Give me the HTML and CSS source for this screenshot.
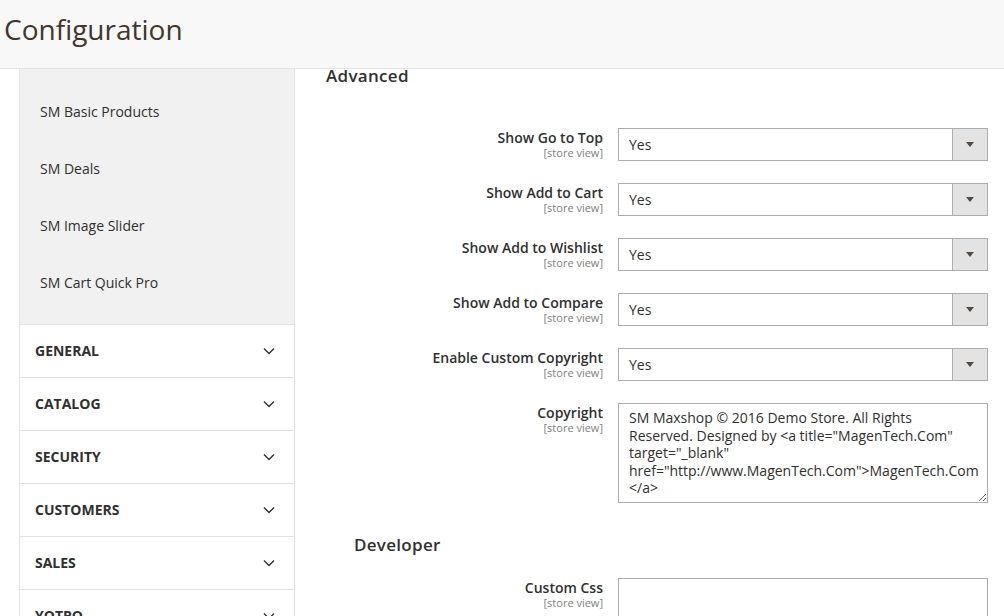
FILE: index.html
```html
<!DOCTYPE html>
<html>
<head>
<meta charset="utf-8">
<link rel="stylesheet" href="styles.css">
</head>
<body>
<header class="page-header">
  <h1 class="page-title">Configuration</h1>
</header>
<div class="page">
  <aside class="sidebar">
    <ul class="sub-list">
      <li class="sub-item">SM Basic Products</li>
      <li class="sub-item">SM Deals</li>
      <li class="sub-item">SM Image Slider</li>
      <li class="sub-item">SM Cart Quick Pro</li>
    </ul>
    <div class="nav-item"><span>GENERAL</span><svg class="chev" viewBox="0 0 12 8"><path d="M1 1.5 6 6.5 11 1.5"/></svg></div>
    <div class="nav-item"><span>CATALOG</span><svg class="chev" viewBox="0 0 12 8"><path d="M1 1.5 6 6.5 11 1.5"/></svg></div>
    <div class="nav-item"><span>SECURITY</span><svg class="chev" viewBox="0 0 12 8"><path d="M1 1.5 6 6.5 11 1.5"/></svg></div>
    <div class="nav-item"><span>CUSTOMERS</span><svg class="chev" viewBox="0 0 12 8"><path d="M1 1.5 6 6.5 11 1.5"/></svg></div>
    <div class="nav-item"><span>SALES</span><svg class="chev" viewBox="0 0 12 8"><path d="M1 1.5 6 6.5 11 1.5"/></svg></div>
    <div class="nav-item"><span>YOTPO</span><svg class="chev" viewBox="0 0 12 8"><path d="M1 1.5 6 6.5 11 1.5"/></svg></div>
  </aside>
  <main class="main">
    <h2 class="section-title">Advanced</h2>
    <div class="fields">
      <div class="field">
        <div class="label"><span class="label-text">Show Go to Top</span><span class="scope">[store view]</span></div>
        <div class="select"><span class="select-value">Yes</span><span class="select-btn"><i class="tri"></i></span></div>
      </div>
      <div class="field">
        <div class="label"><span class="label-text">Show Add to Cart</span><span class="scope">[store view]</span></div>
        <div class="select"><span class="select-value">Yes</span><span class="select-btn"><i class="tri"></i></span></div>
      </div>
      <div class="field">
        <div class="label"><span class="label-text">Show Add to Wishlist</span><span class="scope">[store view]</span></div>
        <div class="select"><span class="select-value">Yes</span><span class="select-btn"><i class="tri"></i></span></div>
      </div>
      <div class="field">
        <div class="label"><span class="label-text">Show Add to Compare</span><span class="scope">[store view]</span></div>
        <div class="select"><span class="select-value">Yes</span><span class="select-btn"><i class="tri"></i></span></div>
      </div>
      <div class="field">
        <div class="label"><span class="label-text">Enable Custom Copyright</span><span class="scope">[store view]</span></div>
        <div class="select"><span class="select-value">Yes</span><span class="select-btn"><i class="tri"></i></span></div>
      </div>
      <div class="field">
        <div class="label"><span class="label-text">Copyright</span><span class="scope">[store view]</span></div>
        <textarea class="textarea">SM Maxshop © 2016 Demo Store. All Rights Reserved. Designed by &lt;a title="MagenTech.Com" target="_blank" href="http://www.MagenTech.Com"&gt;MagenTech.Com&lt;/a&gt;</textarea>
      </div>
    </div>
    <h2 class="section-title sub">Developer</h2>
    <div class="fields">
      <div class="field">
        <div class="label"><span class="label-text">Custom Css</span><span class="scope">[store view]</span></div>
        <textarea class="textarea"></textarea>
      </div>
    </div>
  </main>
</div>
</body>
</html>
```
FILE: styles.css
```css
* { box-sizing: border-box; }
html, body { margin: 0; padding: 0; }
body {
  font-family: "Open Sans", "Liberation Sans", sans-serif;
  color: #303030;
  background: #fff;
  width: 1004px;
  height: 616px;
  overflow: hidden;
}
.page-header {
  height: 69px;
  background: #f8f8f8;
  border-bottom: 1px solid #e3e3e3;
  padding: 0 0 0 4px;
}
.page-title {
  margin: 0;
  font-size: 28px;
  font-weight: 400;
  line-height: 58px;
  color: #41362f;
}
.page {
  display: flex;
  align-items: flex-start;
}
.sidebar {
  margin-left: 19px;
  width: 276px;
  flex: none;
  border-left: 1px solid #e3e3e3;
  border-right: 1px solid #e3e3e3;
}
.sub-list {
  list-style: none;
  margin: 0;
  padding: 14px 0 13px;
  background: #f1f1f1;
}
.sub-item {
  height: 57px;
  line-height: 57px;
  padding-left: 20px;
  font-size: 14px;
  color: #303030;
}
.nav-item {
  height: 53px;
  border-top: 1px solid #e3e3e3;
  display: flex;
  align-items: center;
  justify-content: space-between;
  padding: 0 19px 2px 15px;
  font-size: 14px;
  font-weight: 700;
  color: #303030;
}
.chev {
  width: 12px;
  height: 8px;
  fill: none;
  stroke: #303030;
  stroke-width: 1.4;
  margin-top: 2px;
}
.main {
  flex: 1;
  padding-right: 16px;
}
.section-title {
  margin: 0;
  padding-left: 31px;
  font-size: 17px;
  font-weight: 600;
  line-height: 14px;
  color: #303030;
  letter-spacing: 0.3px;
}
.section-title.sub {
  padding-left: 59px;
  margin-top: 32px;
  line-height: 20px;
}
.fields {
  display: flex;
  flex-direction: column;
  gap: 22px;
  padding-top: 45px;
}
.section-title.sub + .fields { padding-top: 23px; }
.field {
  display: grid;
  grid-template-columns: 1fr 370px;
  column-gap: 15px;
}
.label {
  display: flex;
  flex-direction: column;
  align-items: flex-end;
  padding-top: 1px;
}
.label-text {
  font-size: 14px;
  font-weight: 600;
  line-height: 17px;
  color: #303030;
}
.scope {
  font-size: 11px;
  line-height: 13px;
  color: #808080;
}
.select {
  height: 33px;
  border: 1px solid #adadad;
  display: flex;
  align-items: center;
  background: #fff;
}
.select-value {
  flex: 1;
  padding-left: 10px;
  font-size: 14px;
  color: #303030;
}
.select-btn {
  width: 35px;
  height: 100%;
  background: #e3e3e3;
  border-left: 1px solid #adadad;
  display: flex;
  align-items: center;
  justify-content: center;
}
.tri {
  width: 0;
  height: 0;
  border-left: 4px solid transparent;
  border-right: 4px solid transparent;
  border-top: 5px solid #514943;
}
.textarea {
  display: block;
  width: 370px;
  height: 100px;
  border: 1px solid #adadad;
  border-radius: 0;
  padding: 5px 8px 5px 10px;
  font-family: "Open Sans", "Liberation Sans", sans-serif;
  font-size: 14px;
  line-height: 17.6px;
  color: #303030;
  resize: vertical;
  overflow: hidden;
}
```
